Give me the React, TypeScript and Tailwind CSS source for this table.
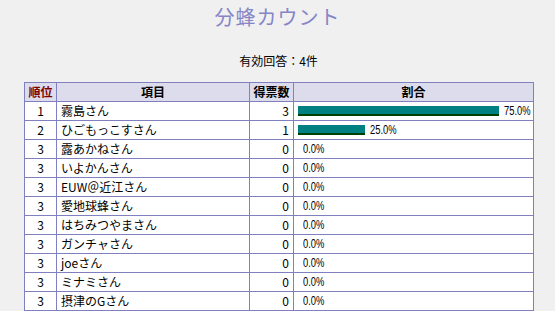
import React from "react";

const rows: { rank: number; name: string; votes: number; pct: number }[] = [
  { rank: 1, name: "霧島さん", votes: 3, pct: 75 },
  { rank: 2, name: "ひごもっこすさん", votes: 1, pct: 25 },
  { rank: 3, name: "露あかねさん", votes: 0, pct: 0 },
  { rank: 3, name: "いよかんさん", votes: 0, pct: 0 },
  { rank: 3, name: "EUW＠近江さん", votes: 0, pct: 0 },
  { rank: 3, name: "愛地球蜂さん", votes: 0, pct: 0 },
  { rank: 3, name: "はちみつやまさん", votes: 0, pct: 0 },
  { rank: 3, name: "ガンチャさん", votes: 0, pct: 0 },
  { rank: 3, name: "joeさん", votes: 0, pct: 0 },
  { rank: 3, name: "ミナミさん", votes: 0, pct: 0 },
  { rank: 3, name: "摂津のGさん", votes: 0, pct: 0 },
];

export default function App() {
  return (
    <div
      className="w-[555px] h-[311px] overflow-hidden bg-[#f0f0f0] text-black"
      style={{ fontFamily: '"Noto Sans CJK JP", "Noto Sans", sans-serif' }}
    >
      <div className="pt-[5px] h-[30px] text-center text-[20px] leading-[24px] text-[#8585c8] tracking-[1px]">
        分蜂カウント
      </div>
      <div className="mt-[23px] h-[29px] text-center text-[12px] leading-[16px] pl-[2px]">
        有効回答：4件
      </div>
      <table className="ml-[24px] w-[510px] border-collapse table-fixed text-[12px] leading-[18px] bg-white">
        <colgroup>
          <col className="w-[32px]" />
          <col className="w-[193px]" />
          <col className="w-[44px]" />
          <col />
        </colgroup>
        <thead>
          <tr className="h-[19px] bg-[#dcdcec]">
            <th className="border border-[#8080c0] p-0 font-bold text-[#800000] text-center">順位</th>
            <th className="border border-[#8080c0] p-0 font-bold text-center">項目</th>
            <th className="border border-[#8080c0] p-0 font-bold text-center">得票数</th>
            <th className="border border-[#8080c0] p-0 font-bold text-center">割合</th>
          </tr>
        </thead>
        <tbody>
          {rows.map((r, i) => (
            <tr key={i} className="h-[19px]">
              <td className="border border-[#8080c0] p-0 text-center">{r.rank}</td>
              <td className="border border-[#8080c0] py-0 pl-[4px] pr-0 whitespace-nowrap">{r.name}</td>
              <td className="border border-[#8080c0] py-0 pl-0 pr-[4px] text-right">{r.votes}</td>
              <td className="border border-[#8080c0] py-0 pl-[4px] pr-0">
                <div className="flex items-center h-[18px]">
                  <div
                    className="shrink-0 h-[10px] bg-[#008080] border-b-2 border-[#004000] box-border"
                    style={{ width: r.pct * 2.68, display: r.pct > 0 ? "block" : "none" }}
                  />
                  <span
                    className="ml-[5px] shrink-0 whitespace-nowrap inline-block text-[12px] origin-left scale-x-[0.78]"
                    style={{ fontFamily: '"Liberation Sans", sans-serif' }}
                  >
                    {r.pct.toFixed(1)}%
                  </span>
                </div>
              </td>
            </tr>
          ))}
        </tbody>
      </table>
    </div>
  );
}
